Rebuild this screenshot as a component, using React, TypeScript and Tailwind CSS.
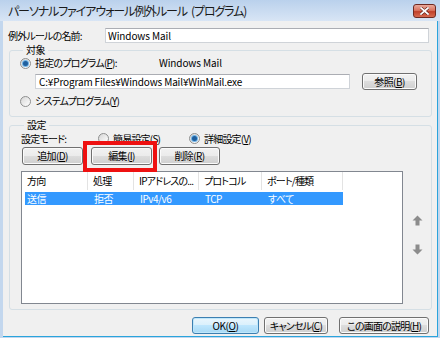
import React from "react";

const F = "font-['Noto_Sans_CJK_JP','Noto_Sans',sans-serif] [font-feature-settings:'palt']";

function Btn({ children, className = "", def = false }: { children: React.ReactNode; className?: string; def?: boolean }) {
  return (
    <div
      className={
        "flex shrink-0 items-center justify-center rounded-[3px] border text-[10px] leading-none text-black " +
        (def
          ? "border-[#3c7fb1] bg-[linear-gradient(#eaf6fd_0%,#d9f0fc_50%,#bee6fd_50%,#a7d9f5_100%)] shadow-[inset_0_0_0_1px_#bfe7fb]"
          : "border-[#707070] bg-[linear-gradient(#f2f2f2_0%,#ebebeb_50%,#dddddd_50%,#cfcfcf_100%)] shadow-[inset_0_0_0_1px_#fbfbfb]") +
        " " +
        className
      }
    >
      {children}
    </div>
  );
}

function Radio({ on }: { on?: boolean }) {
  return (
    <div className="flex h-[11px] w-[11px] shrink-0 items-center justify-center rounded-full border border-[#8e8f8f] bg-[linear-gradient(135deg,#d6d6d6,#ffffff)]">
      {on && <div className="h-[5px] w-[5px] rounded-full bg-[#1f5f9e] shadow-[0_0_0_1px_#6fb3e6]" />}
    </div>
  );
}

function U({ c }: { c: string }) {
  return <span className="underline underline-offset-1">{c}</span>;
}

function Arrow({ down }: { down?: boolean }) {
  return (
    <svg width="11" height="11" viewBox="0 0 11 11" className={down ? "rotate-180" : ""}>
      <path d="M5.5 0.5 L10.5 5.5 H7.5 V10.5 H3.5 V5.5 H0.5 Z" fill="#8c8c8c" />
    </svg>
  );
}

export default function App() {
  const cols = [
    { w: "w-[66px]", h: "方向", v: "送信" },
    { w: "w-[46px]", h: "処理", v: "拒否" },
    { w: "w-[65px]", h: "IPアドレスの...", v: "IPv4/v6" },
    { w: "w-[63px]", h: "プロトコル", v: "TCP" },
    { w: "w-[81px]", h: "ポート/種類", v: "すべて" },
  ];
  return (
    <div className={"flex h-[338px] w-[440px] flex-col overflow-hidden bg-[#c3d7ee] text-[10px] leading-[12px] text-black " + F}>
      {/* title bar */}
      <div className="flex h-[21px] shrink-0 items-center bg-[linear-gradient(#bad1ec,#d8e5f5)] pl-[8px] pr-[4px]">
        <span className="text-[12px] leading-none tracking-[-1.1px] text-[#1a1a1a]">
          パーソナルファイアウォール例外ルール<span className="ml-[4px]">(プログラム)</span>
        </span>
        <div className="ml-auto flex h-[14px] w-[23px] items-center justify-center rounded-[3px] border border-[#6e2a22] bg-[linear-gradient(#eaa99b_0%,#d9735f_45%,#c0402a_55%,#d66a50_100%)]">
          <svg width="9" height="8" viewBox="0 0 9 8">
            <path d="M1 1 L8 7 M8 1 L1 7" stroke="#5a1d15" strokeWidth="3" strokeLinecap="square" />
            <path d="M1 1 L8 7 M8 1 L1 7" stroke="#ffffff" strokeWidth="1.8" strokeLinecap="square" />
          </svg>
        </div>
      </div>
      {/* client */}
      <div className="ml-[3px] flex h-[316px] w-[435px] flex-col border-b border-r border-[#2aa4dc] bg-[#f0f0f0]">
        {/* name row */}
        <div className="mt-[7px] flex h-[15px] items-center pl-[5px]">
          <span className="w-[97px] tracking-[-0.8px]">例外ルールの名前:</span>
          <div className="flex h-[15px] w-[324px] items-center border border-[#cfd3d8] border-t-[#abadb3] bg-white pl-[2px] tracking-[-0.1px]">
            Windows Mail
          </div>
        </div>
        {/* group target */}
        <fieldset className="ml-[6px] h-[74px] w-[423px] rounded-[3px] border border-[#d5dfe5] pl-[10px] pb-[8px]">
          <legend className="ml-[3px] px-[3px] leading-[14px] tracking-[-0.5px]">対象</legend>
          <div className="flex h-[12px] items-center">
            <Radio on />
            <span className="ml-[4px] w-[124px] tracking-[-0.8px]">
              指定のプログラム(<U c="P" />):
            </span>
            <span className="tracking-[-0.1px]">Windows Mail</span>
          </div>
          <div className="mt-[4px] flex h-[17px] items-center">
            <div className="ml-[15px] flex h-[15px] w-[315px] items-center border border-[#cfd3d8] border-t-[#abadb3] bg-white pl-[3px] tracking-[-0.15px]">
              C:¥Program Files¥Windows Mail¥WinMail.exe
            </div>
            <Btn className="ml-[12px] h-[17px] w-[55px] tracking-[-0.6px]">
              参照(<U c="B" />)
            </Btn>
          </div>
          <div className="mt-[5px] flex h-[12px] items-center">
            <Radio />
            <span className="ml-[4px] tracking-[-0.8px]">
              システムプログラム(<U c="Y" />)
            </span>
          </div>
        </fieldset>
        {/* group settings */}
        <fieldset className="ml-[6px] mt-[1px] h-[192px] w-[423px] rounded-[3px] border border-[#d5dfe5] pl-[11px]">
          <legend className="ml-[3px] px-[3px] leading-[14px] tracking-[-0.5px]">設定</legend>
          <div className="flex h-[13px] items-center">
            <span className="w-[77px] tracking-[-0.8px]">設定モード:</span>
            <Radio />
            <span className="ml-[4px] w-[76px] tracking-[-0.8px]">
              簡易設定(<U c="S" />)
            </span>
            <Radio on />
            <span className="ml-[4px] tracking-[-0.8px]">
              詳細設定(<U c="V" />)
            </span>
          </div>
          <div className="relative mt-[2px] flex h-[18px] items-center">
            <Btn className="ml-[1px] h-[18px] w-[61px] tracking-[-0.6px]">
              追加(<U c="D" />)
            </Btn>
            <Btn className="ml-[8px] h-[18px] w-[61px] tracking-[-0.6px]">
              編集(<U c="I" />)
            </Btn>
            <Btn className="ml-[7px] h-[18px] w-[61px] tracking-[-0.6px]">
              削除(<U c="R" />)
            </Btn>
            <div className="pointer-events-none absolute left-[62px] top-[-6px] h-[31px] w-[74px] border-[4px] border-[#ee1111]" />
          </div>
          <div className="mt-[6px] flex">
            <div className="h-[133px] w-[382px] border border-[#828790] bg-white">
              <div className="flex h-[18px] items-stretch">
                {cols.map((c) => (
                  <div key={c.h} className={"flex items-center overflow-hidden border-r border-[#e3e3e3] pl-[5px] tracking-[-0.8px] whitespace-nowrap " + c.w}>
                    {c.h}
                  </div>
                ))}
              </div>
              <div className="ml-[3px] mt-[2px] flex h-[13px] w-[318px] items-center bg-[#3399ff] text-white">
                {cols.map((c, i) => (
                  <div key={c.v} className={"flex items-center tracking-[-0.5px] whitespace-nowrap " + (i === 0 ? "w-[63px] pl-[2px]" : c.w + " pl-[6px]")}>
                    {c.v}
                  </div>
                ))}
              </div>
            </div>
            <div className="flex w-[28px] flex-col items-center pt-[44px]">
              <Arrow />
              <div className="mt-[18px]">
                <Arrow down />
              </div>
            </div>
          </div>
        </fieldset>
        {/* bottom buttons */}
        <div className="mt-[7px] flex h-[17px] items-center">
          <Btn def className="ml-[189px] h-[17px] w-[67px] tracking-[-0.4px]">
            OK(<U c="O" />)
          </Btn>
          <Btn className="ml-[5px] h-[17px] w-[64px] tracking-[-0.8px]">
            キャンセル(<U c="C" />)
          </Btn>
          <Btn className="ml-[11px] h-[17px] w-[90px] tracking-[-0.8px]">
            この画面の説明(<U c="H" />)
          </Btn>
        </div>
      </div>
    </div>
  );
}
